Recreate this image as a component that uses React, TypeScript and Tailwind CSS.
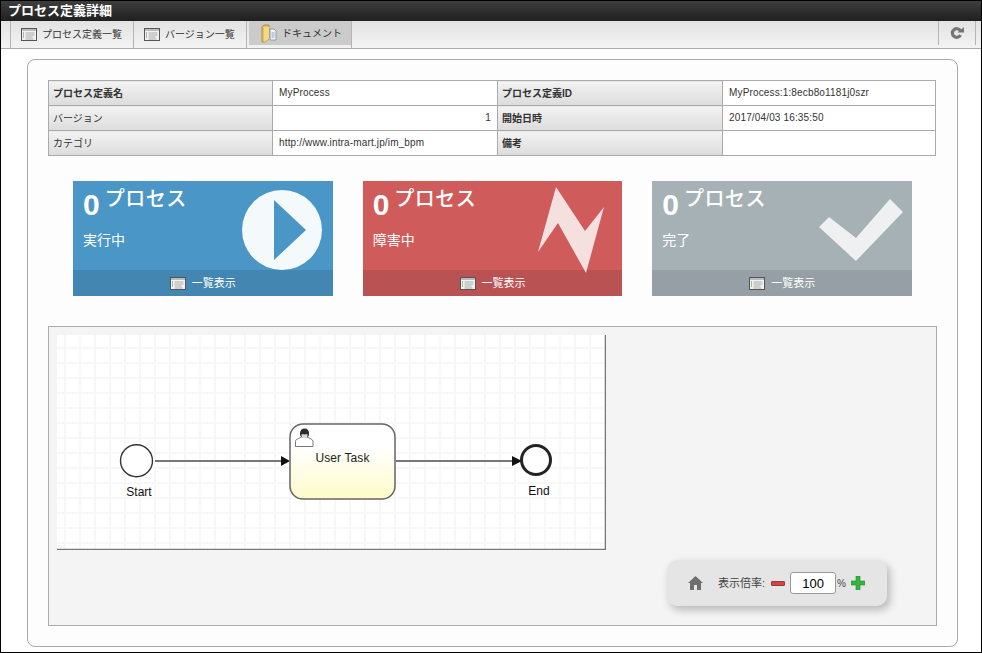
import type { ReactNode } from "react";

const font = "font-['Liberation_Sans','Noto_Sans_CJK_JP',sans-serif]";

function ListIcon() {
  return (
    <svg width="16" height="13" viewBox="0 0 16 13" className="shrink-0">
      <rect x="0.5" y="0.5" width="15" height="12" fill="#f2f2f2" stroke="#555" />
      <rect x="1" y="1" width="14" height="2" fill="#bdbdbd" />
      <path d="M2 5h1M2 7h1M2 9h1" stroke="#4a8a4a" />
      <path d="M4.5 5h9M4.5 7h9M4.5 9h7M4.5 11h8" stroke="#aaa" />
    </svg>
  );
}

function FolderIcon() {
  return (
    <svg width="16" height="19" viewBox="0 0 16 19" className="shrink-0">
      <path d="M1 3l2-2h5v14l-4 3H1z" fill="#e5c25e" stroke="#a9862f" strokeWidth="0.8" />
      <path d="M3 3h5v12l-5 3z" fill="#f2d98a" />
      <path d="M9 5h4l2 2v9H9z" fill="#eef3f8" stroke="#7c8ea3" strokeWidth="0.8" />
      <path d="M10.5 9h3M10.5 11h3M10.5 13h3" stroke="#8fa2b5" />
    </svg>
  );
}

const rows = [
  ["プロセス定義名", "MyProcess", "プロセス定義ID", "MyProcess:1:8ecb8o1181j0szr"],
  ["バージョン", "1", "開始日時", "2017/04/03 16:35:50"],
  ["カテゴリ", "http://www.intra-mart.jp/im_bpm", "備考", ""],
];

function Th({ children, bold }: { children: ReactNode; bold?: boolean }) {
  return (
    <td className={`h-[25px] border border-[#aaa] bg-gradient-to-b from-[#f3f3f3] to-[#dcdcdc] px-[4px] text-[10px] text-[#333] ${bold ? "font-bold" : ""}`}>
      {children}
    </td>
  );
}

function Td({ children, right }: { children: ReactNode; right?: boolean }) {
  return (
    <td className={`h-[25px] border border-[#aaa] bg-white px-[6px] pb-[2px] text-[10px] tracking-[0.15px] text-[#333] ${right ? "text-right" : ""}`}>
      {children}
    </td>
  );
}

function StatCard({ label, bg, foot, children }: { label: string; bg: string; foot: string; children: ReactNode }) {
  return (
    <div className={`relative h-[115px] flex-1 overflow-hidden text-white ${bg}`}>
      <div className="flex h-[89px] flex-col pl-[10px]">
        <div className="flex h-[36px] items-start pt-[3px]">
          <span className="mt-[3px] text-[30px] leading-[36px] font-bold">0</span>
          <span className="mt-[1px] ml-[5px] text-[20px] leading-[28px] font-medium tracking-[0.5px]">プロセス</span>
        </div>
        <div className="mt-[13px] text-[14px] leading-[20px]">{label}</div>
      </div>
      <div className={`flex h-[26px] items-center justify-center gap-[6px] text-[11px] ${foot}`}>
        <ListIcon />
        <span>一覧表示</span>
      </div>
      <svg className="absolute top-0 left-0" width="259" height="115" viewBox="0 0 259 115">
        {children}
      </svg>
    </div>
  );
}

function Diagram() {
  return (
    <svg width="549" height="215" viewBox="57 335 549 215" className="block">
      <defs>
        <pattern id="grid" x="64" y="347" width="15" height="15" patternUnits="userSpaceOnUse">
          <path d="M1 0v15M0 1h15" stroke="#f7f7f7" strokeWidth="2" />
        </pattern>
        <linearGradient id="taskFill" x1="0" y1="0" x2="0" y2="1">
          <stop offset="0.3" stopColor="#ffffff" />
          <stop offset="1" stopColor="#fffbc9" />
        </linearGradient>
      </defs>
      <rect x="57" y="335" width="549" height="215" fill="#fff" />
      <rect x="57" y="335" width="549" height="215" fill="url(#grid)" />
      <path d="M57 549.5H605.5V335" fill="none" stroke="#777" strokeWidth="1.5" />

      <circle cx="136.5" cy="460.7" r="16" fill="#fff" stroke="#333" strokeWidth="1.4" />
      <text x="139" y="496" textAnchor="middle" fontSize="12" fill="#111" fontFamily="Liberation Sans">Start</text>

      <path d="M155 461H282" stroke="#777" strokeWidth="2" />
      <path d="M281 456l9 5-9 5z" fill="#111" />

      <rect x="290" y="424" width="105" height="75" rx="13" fill="url(#taskFill)" stroke="#666" strokeWidth="1.5" />
      <text x="342.5" y="462" textAnchor="middle" fontSize="12" letterSpacing="0.1" fill="#222" fontFamily="Liberation Sans">User Task</text>
      <path d="M295.500 446.500v-5c0-2.500 3.500-3 6-4.500h5.500c2.500 1.500 6 2 6 4.500v5z" fill="#fff" stroke="#555" strokeWidth="0.8" />
      <path d="M300 433a4.500 4.500 0 0 1 9 0v2l-1 2h-7l-1-2z" fill="#2b2b2b" />
      <path d="M301.500 434c1 .5 5 .5 6 0v2.500l-1.500 1.500h-3l-1.500-1.500z" fill="#d9d9d9" />

      <path d="M396 461H513" stroke="#777" strokeWidth="2" />
      <path d="M512 456l10 5-10 5z" fill="#111" />

      <circle cx="536" cy="460" r="14.500" fill="#fff" stroke="#222" strokeWidth="3" />
      <text x="539" y="495" textAnchor="middle" fontSize="12" fill="#111" fontFamily="Liberation Sans">End</text>
    </svg>
  );
}

export default function App() {
  return (
    <div className={`flex h-[653px] w-[982px] flex-col overflow-hidden border-x border-b border-black bg-white ${font}`}>
      <div className="h-[21px] shrink-0 border-t border-black bg-gradient-to-b from-[#3e3e3e] to-[#202020] pl-[7px] text-[13px] leading-[19px] font-bold text-white">
        プロセス定義詳細
      </div>

      <div className="flex h-[28px] shrink-0 items-start justify-between border-b border-[#aaa] bg-gradient-to-b from-[#e2e2e2] to-[#f3f3f3] pl-[9px]">
        <div className="flex h-[27px] items-center border-l border-[#b5b5b5] text-[10px] whitespace-nowrap text-[#333]">
          <div className="flex h-full w-[123px] items-center gap-[5px] border-r border-[#b5b5b5] pl-[10px]">
            <ListIcon />
            <span>プロセス定義一覧</span>
          </div>
          <div className="flex h-full w-[113px] items-center gap-[5px] border-r border-[#b5b5b5] pl-[10px]">
            <ListIcon />
            <span>バージョン一覧</span>
          </div>
          <div className="h-full border-r border-[#b5b5b5] pl-[2px]">
            <div className="flex h-[24px] w-[102px] items-center gap-[5px] bg-[#cbcbcb] pl-[12px]">
              <FolderIcon />
              <span>ドキュメント</span>
            </div>
          </div>
        </div>
        <div className="mr-[5px] flex h-[24px] w-[38px] items-center justify-center border-x border-[#b5b5b5]">
          <svg width="14" height="12" viewBox="0 0 14 12">
            <path d="M10.500 4A4.300 4.300 0 1 0 10.500 8" fill="none" stroke="#757575" strokeWidth="3.200" />
            <path d="M7.500 5.500H14V0z" fill="#757575" />
          </svg>
        </div>
      </div>

      <div className="mt-[10px] ml-[26px] flex h-[588px] w-[931px] flex-col rounded-[8px] border border-[#aaa] bg-[#fdfdfe] px-[20px] pt-[20px]">
        <table className="w-[887px] table-fixed border-collapse">
          <colgroup>
            <col className="w-[224px]" />
            <col className="w-[225px]" />
            <col className="w-[225px]" />
            <col className="w-[213px]" />
          </colgroup>
          <tbody>
            {rows.map((r, i) => (
              <tr key={r[0]}>
                <Th bold={i === 0}>{r[0]}</Th>
                <Td right={i === 1}>{r[1]}</Td>
                <Th bold>{r[2]}</Th>
                <Td>{r[3]}</Td>
              </tr>
            ))}
          </tbody>
        </table>

        <div className="mt-[25px] ml-[25px] flex w-[839px] gap-[30px]">
          <StatCard label="実行中" bg="bg-[#4a96c6]" foot="bg-[#4386b1]">
            <circle cx="209" cy="49" r="40" fill="#f4f9fc" />
            <path d="M201 19v60l32-30z" fill="#4a96c6" />
          </StatCard>
          <StatCard label="障害中" bg="bg-[#cf5b5b]" foot="bg-[#b95252]">
            <path d="M193 6l29 44 19-24-18 66-28-50-20 29z" fill="#f6dfdf" />
          </StatCard>
          <StatCard label="完了" bg="bg-[#a6b1b6]" foot="bg-[#969fa5]">
            <path d="M238 18l13 13-47 49-37-34 10-10 27 21z" fill="#eef0f1" />
          </StatCard>
        </div>

        <div className="relative mt-[30px] h-[300px] w-[889px] border border-[#aaa] bg-[#f4f4f4] pt-[8px] pl-[8px]">
          <Diagram />
          <div className="absolute right-[49px] bottom-[19px] flex h-[46px] w-[220px] items-center rounded-[10px] bg-[#e5e5e5] pl-[21px] text-[11px] text-[#444] shadow-[3px_4px_8px_rgba(0,0,0,0.25)]">
            <svg width="15" height="14" viewBox="0 0 15 14" className="shrink-0">
              <path d="M7.500 0L15 7h-2v7H9V9H6v5H2V7H0z" fill="#6e6e6e" />
            </svg>
            <span className="ml-[15px] whitespace-nowrap">表示倍率:</span>
            <span className="ml-[6px] h-[5px] w-[14px] rounded-[1px] border border-[#a33] bg-[#c9474a]" />
            <input
              readOnly
              value="100"
              className="ml-[5px] h-[22px] w-[46px] rounded-[3px] border border-[#999] bg-white text-center text-[13px] text-black"
            />
            <span className="ml-[1px] text-[10px]">%</span>
            <svg width="14" height="14" viewBox="0 0 14 14" className="ml-[5px] shrink-0">
              <path d="M5 0h4v5h5v4H9v5H5V9H0V5h5z" fill="#35b53f" stroke="#1f8a2a" strokeWidth="0.6" />
            </svg>
          </div>
        </div>
      </div>
    </div>
  );
}
